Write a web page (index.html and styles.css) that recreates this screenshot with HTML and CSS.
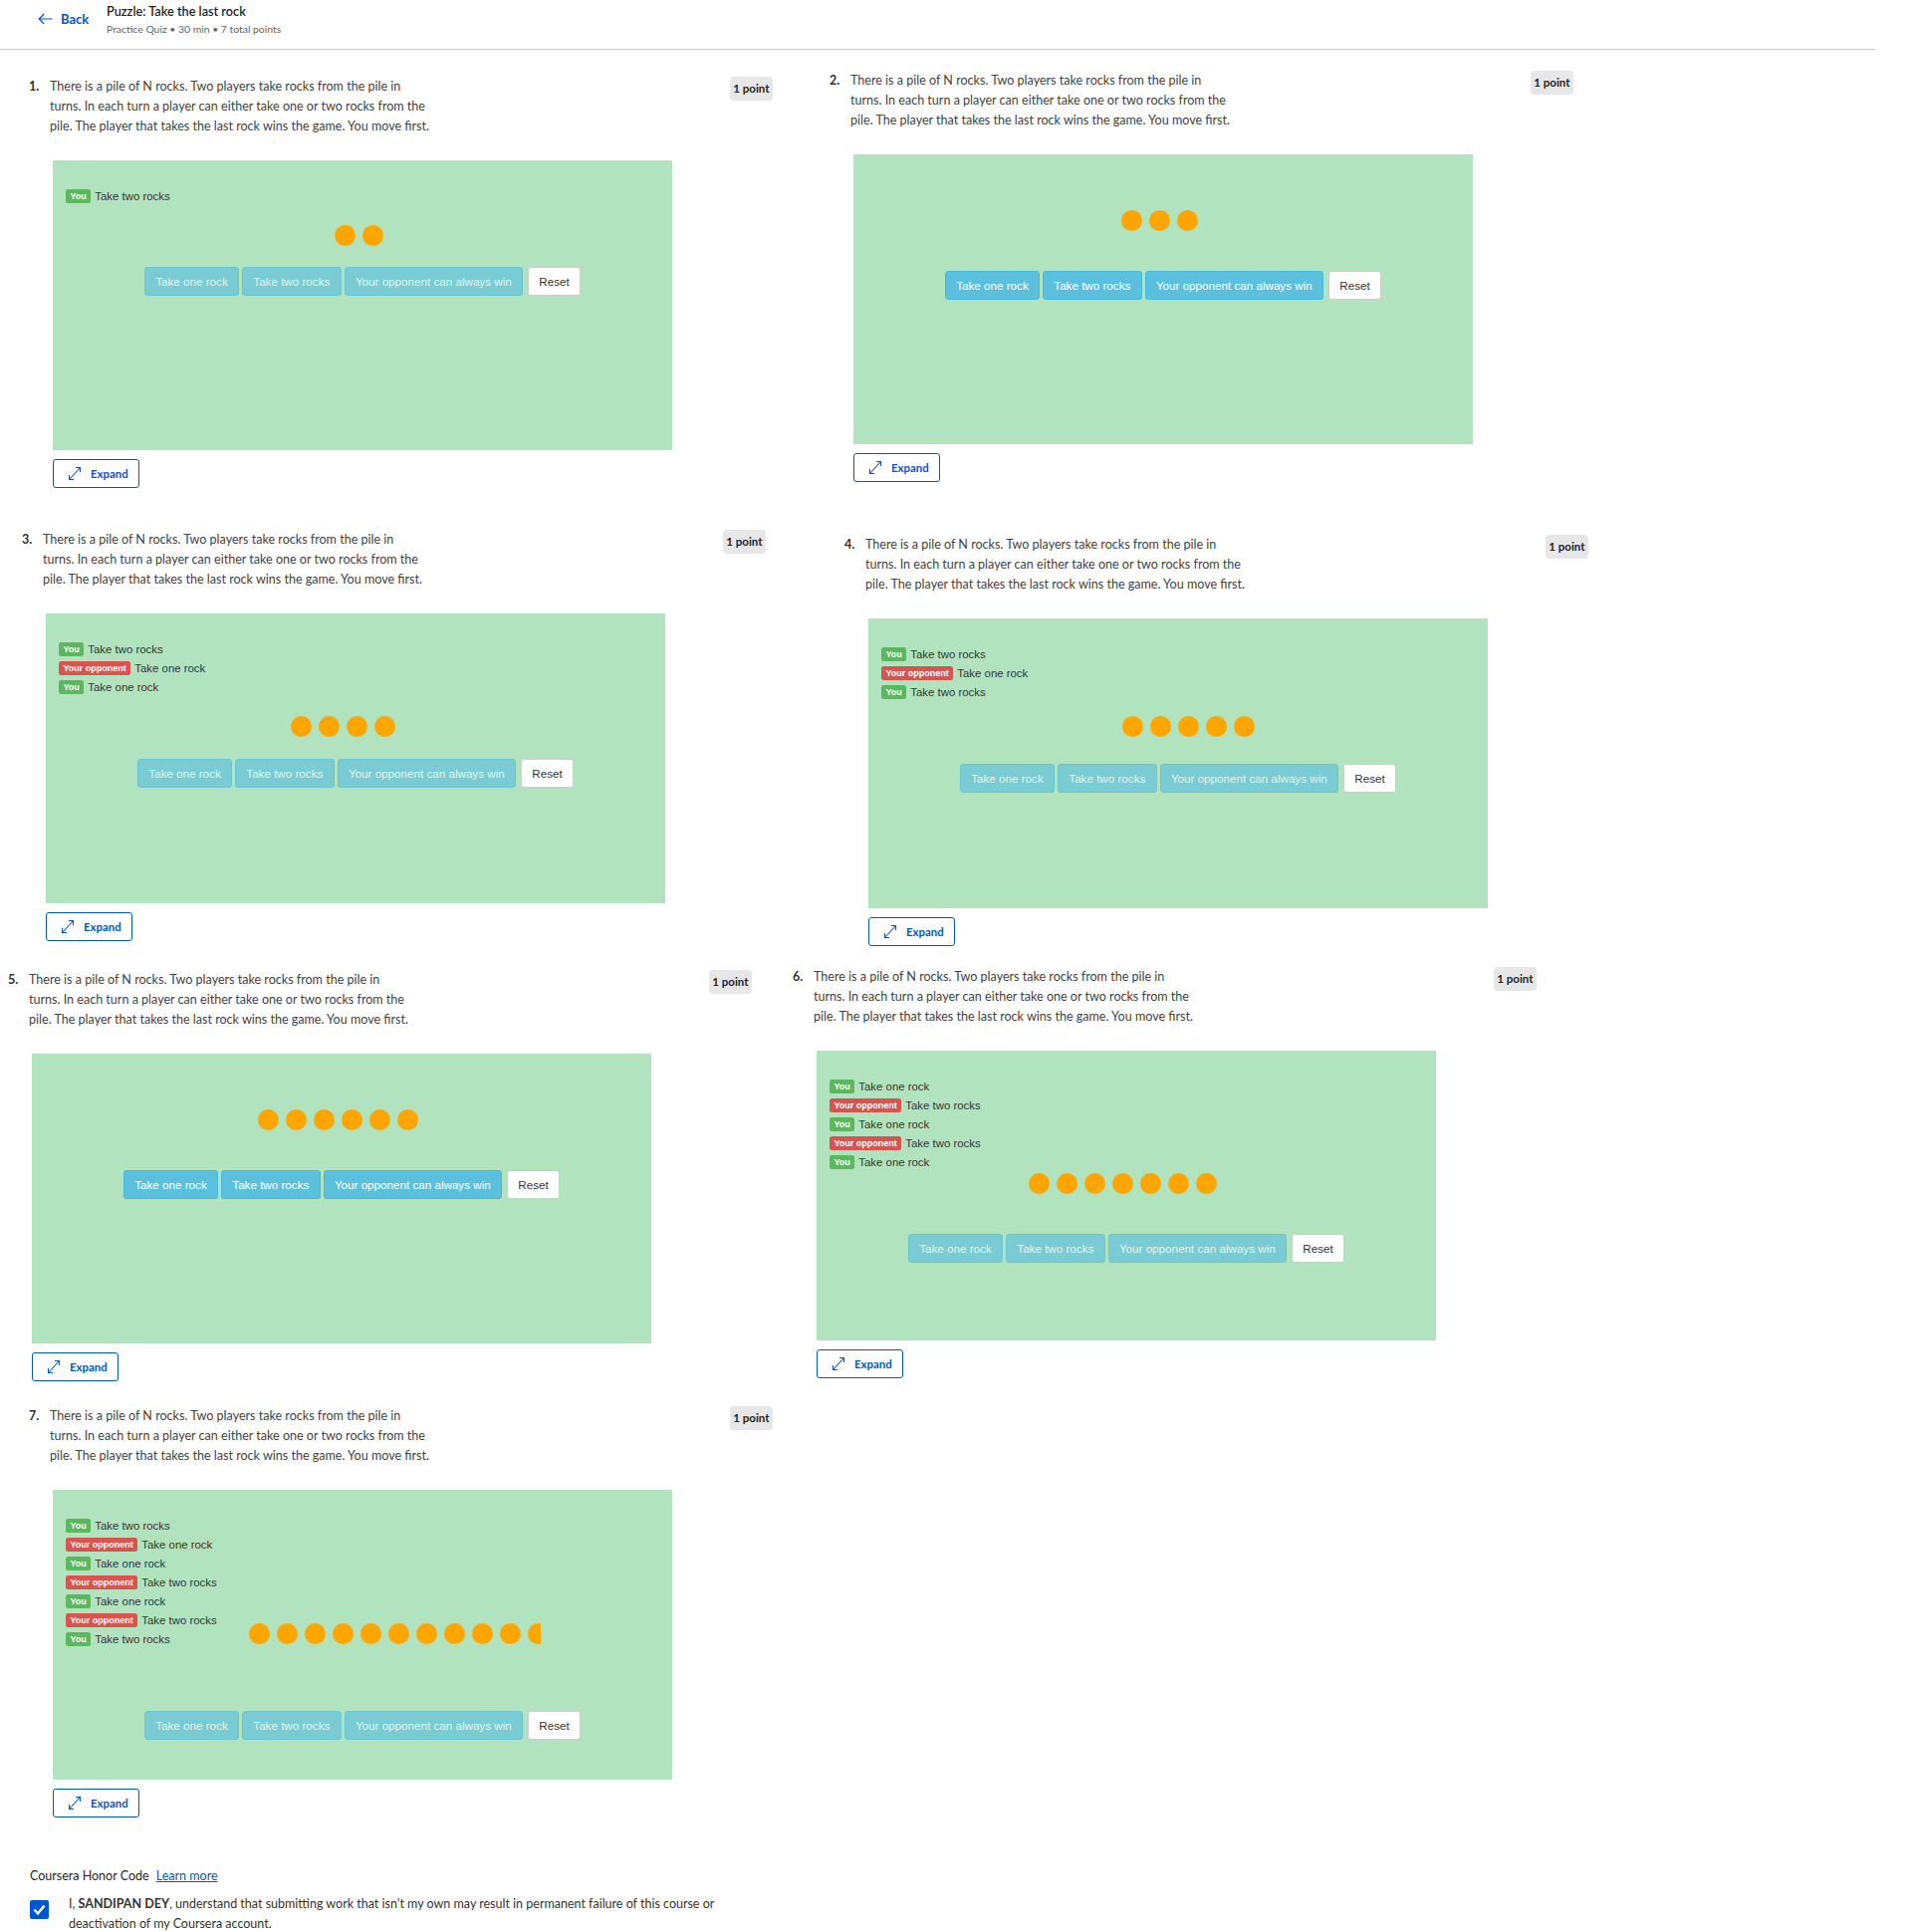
FILE: index.html
```html
<!DOCTYPE html>
<html lang="en">
<head>
<meta charset="utf-8">
<title>Puzzle: Take the last rock</title>
<link rel="stylesheet" href="styles.css">
</head>
<body>
<header class="topbar">
  <a class="back" href="#">
    <svg class="back-icon" width="15" height="12" viewBox="0 0 15 12"><path d="M14.5 6H1.2M6.2 1L1.2 6l5 5" fill="none" stroke="#0056d2" stroke-width="1.2"/></svg>
    <span>Back</span>
  </a>
  <div class="title-block">
    <div class="title">Puzzle: Take the last rock</div>
    <div class="subtitle">Practice Quiz • 30 min • 7 total points</div>
  </div>
</header>

<main class="questions">
  <div class="qrow qrow-1">
    <section class="question q1">
      <div class="q-head">
        <div class="q-num">1.</div>
        <div class="q-text">There is a pile of N rocks. Two players take rocks from the pile in<br>turns. In each turn a player can either take one or two rocks from the<br>pile. The player that takes the last rock wins the game. You move first.</div>
        <div class="points">1 point</div>
      </div>
      <div class="q-body">
        <div class="board lay-b">
          <div class="history">
            <div class="move"><span class="tag tag-you">You</span>Take two rocks</div>
          </div>
          <div class="rocks"><span class="rock"></span><span class="rock"></span></div>
          <div class="controls">
            <button class="btn btn-info is-disabled">Take one rock</button>
            <button class="btn btn-info is-disabled">Take two rocks</button>
            <button class="btn btn-info is-disabled">Your opponent can always win</button>
            <button class="btn btn-reset">Reset</button>
          </div>
        </div>
        <button class="expand"><svg width="14" height="15" viewBox="0 0 14 15"><path d="M1.5 13.5L12.5 1.5M8 1.5h4.5V6M1.5 9v4.5H6" fill="none" stroke="#0056d2" stroke-width="1.1"/></svg><span>Expand</span></button>
      </div>
    </section>

    <section class="question q2">
      <div class="q-head">
        <div class="q-num">2.</div>
        <div class="q-text">There is a pile of N rocks. Two players take rocks from the pile in<br>turns. In each turn a player can either take one or two rocks from the<br>pile. The player that takes the last rock wins the game. You move first.</div>
        <div class="points">1 point</div>
      </div>
      <div class="q-body">
        <div class="board lay-a">
          <div class="rocks"><span class="rock"></span><span class="rock"></span><span class="rock"></span></div>
          <div class="controls">
            <button class="btn btn-info">Take one rock</button>
            <button class="btn btn-info">Take two rocks</button>
            <button class="btn btn-info">Your opponent can always win</button>
            <button class="btn btn-reset">Reset</button>
          </div>
        </div>
        <button class="expand"><svg width="14" height="15" viewBox="0 0 14 15"><path d="M1.5 13.5L12.5 1.5M8 1.5h4.5V6M1.5 9v4.5H6" fill="none" stroke="#0056d2" stroke-width="1.1"/></svg><span>Expand</span></button>
      </div>
    </section>
  </div>

  <div class="qrow qrow-2">
    <section class="question q3">
      <div class="q-head">
        <div class="q-num">3.</div>
        <div class="q-text">There is a pile of N rocks. Two players take rocks from the pile in<br>turns. In each turn a player can either take one or two rocks from the<br>pile. The player that takes the last rock wins the game. You move first.</div>
        <div class="points">1 point</div>
      </div>
      <div class="q-body">
        <div class="board lay-c">
          <div class="history">
            <div class="move"><span class="tag tag-you">You</span>Take two rocks</div>
            <div class="move"><span class="tag tag-opp">Your opponent</span>Take one rock</div>
            <div class="move"><span class="tag tag-you">You</span>Take one rock</div>
          </div>
          <div class="rocks"><span class="rock"></span><span class="rock"></span><span class="rock"></span><span class="rock"></span></div>
          <div class="controls">
            <button class="btn btn-info is-disabled">Take one rock</button>
            <button class="btn btn-info is-disabled">Take two rocks</button>
            <button class="btn btn-info is-disabled">Your opponent can always win</button>
            <button class="btn btn-reset">Reset</button>
          </div>
        </div>
        <button class="expand"><svg width="14" height="15" viewBox="0 0 14 15"><path d="M1.5 13.5L12.5 1.5M8 1.5h4.5V6M1.5 9v4.5H6" fill="none" stroke="#0056d2" stroke-width="1.1"/></svg><span>Expand</span></button>
      </div>
    </section>

    <section class="question q4">
      <div class="q-head">
        <div class="q-num">4.</div>
        <div class="q-text">There is a pile of N rocks. Two players take rocks from the pile in<br>turns. In each turn a player can either take one or two rocks from the<br>pile. The player that takes the last rock wins the game. You move first.</div>
        <div class="points">1 point</div>
      </div>
      <div class="q-body">
        <div class="board lay-d">
          <div class="history">
            <div class="move"><span class="tag tag-you">You</span>Take two rocks</div>
            <div class="move"><span class="tag tag-opp">Your opponent</span>Take one rock</div>
            <div class="move"><span class="tag tag-you">You</span>Take two rocks</div>
          </div>
          <div class="rocks"><span class="rock"></span><span class="rock"></span><span class="rock"></span><span class="rock"></span><span class="rock"></span></div>
          <div class="controls">
            <button class="btn btn-info is-disabled">Take one rock</button>
            <button class="btn btn-info is-disabled">Take two rocks</button>
            <button class="btn btn-info is-disabled">Your opponent can always win</button>
            <button class="btn btn-reset">Reset</button>
          </div>
        </div>
        <button class="expand"><svg width="14" height="15" viewBox="0 0 14 15"><path d="M1.5 13.5L12.5 1.5M8 1.5h4.5V6M1.5 9v4.5H6" fill="none" stroke="#0056d2" stroke-width="1.1"/></svg><span>Expand</span></button>
      </div>
    </section>
  </div>

  <div class="qrow qrow-3">
    <section class="question q5">
      <div class="q-head">
        <div class="q-num">5.</div>
        <div class="q-text">There is a pile of N rocks. Two players take rocks from the pile in<br>turns. In each turn a player can either take one or two rocks from the<br>pile. The player that takes the last rock wins the game. You move first.</div>
        <div class="points">1 point</div>
      </div>
      <div class="q-body">
        <div class="board lay-a">
          <div class="rocks"><span class="rock"></span><span class="rock"></span><span class="rock"></span><span class="rock"></span><span class="rock"></span><span class="rock"></span></div>
          <div class="controls">
            <button class="btn btn-info">Take one rock</button>
            <button class="btn btn-info">Take two rocks</button>
            <button class="btn btn-info">Your opponent can always win</button>
            <button class="btn btn-reset">Reset</button>
          </div>
        </div>
        <button class="expand"><svg width="14" height="15" viewBox="0 0 14 15"><path d="M1.5 13.5L12.5 1.5M8 1.5h4.5V6M1.5 9v4.5H6" fill="none" stroke="#0056d2" stroke-width="1.1"/></svg><span>Expand</span></button>
      </div>
    </section>

    <section class="question q6">
      <div class="q-head">
        <div class="q-num">6.</div>
        <div class="q-text">There is a pile of N rocks. Two players take rocks from the pile in<br>turns. In each turn a player can either take one or two rocks from the<br>pile. The player that takes the last rock wins the game. You move first.</div>
        <div class="points">1 point</div>
      </div>
      <div class="q-body">
        <div class="board lay-e">
          <div class="history">
            <div class="move"><span class="tag tag-you">You</span>Take one rock</div>
            <div class="move"><span class="tag tag-opp">Your opponent</span>Take two rocks</div>
            <div class="move"><span class="tag tag-you">You</span>Take one rock</div>
            <div class="move"><span class="tag tag-opp">Your opponent</span>Take two rocks</div>
            <div class="move"><span class="tag tag-you">You</span>Take one rock</div>
          </div>
          <div class="rocks"><span class="rock"></span><span class="rock"></span><span class="rock"></span><span class="rock"></span><span class="rock"></span><span class="rock"></span><span class="rock"></span></div>
          <div class="controls">
            <button class="btn btn-info is-disabled">Take one rock</button>
            <button class="btn btn-info is-disabled">Take two rocks</button>
            <button class="btn btn-info is-disabled">Your opponent can always win</button>
            <button class="btn btn-reset">Reset</button>
          </div>
        </div>
        <button class="expand"><svg width="14" height="15" viewBox="0 0 14 15"><path d="M1.5 13.5L12.5 1.5M8 1.5h4.5V6M1.5 9v4.5H6" fill="none" stroke="#0056d2" stroke-width="1.1"/></svg><span>Expand</span></button>
      </div>
    </section>
  </div>

  <div class="qrow qrow-4">
    <section class="question q7">
      <div class="q-head">
        <div class="q-num">7.</div>
        <div class="q-text">There is a pile of N rocks. Two players take rocks from the pile in<br>turns. In each turn a player can either take one or two rocks from the<br>pile. The player that takes the last rock wins the game. You move first.</div>
        <div class="points">1 point</div>
      </div>
      <div class="q-body">
        <div class="board lay-f">
          <div class="board-top">
            <div class="history history-fixed">
              <div class="move"><span class="tag tag-you">You</span>Take two rocks</div>
              <div class="move"><span class="tag tag-opp">Your opponent</span>Take one rock</div>
              <div class="move"><span class="tag tag-you">You</span>Take one rock</div>
              <div class="move"><span class="tag tag-opp">Your opponent</span>Take two rocks</div>
              <div class="move"><span class="tag tag-you">You</span>Take one rock</div>
              <div class="move"><span class="tag tag-opp">Your opponent</span>Take two rocks</div>
              <div class="move"><span class="tag tag-you">You</span>Take two rocks</div>
            </div>
            <div class="rocks rocks-clip"><span class="rock"></span><span class="rock"></span><span class="rock"></span><span class="rock"></span><span class="rock"></span><span class="rock"></span><span class="rock"></span><span class="rock"></span><span class="rock"></span><span class="rock"></span><span class="rock"></span><span class="rock"></span></div>
          </div>
          <div class="controls">
            <button class="btn btn-info is-disabled">Take one rock</button>
            <button class="btn btn-info is-disabled">Take two rocks</button>
            <button class="btn btn-info is-disabled">Your opponent can always win</button>
            <button class="btn btn-reset">Reset</button>
          </div>
        </div>
        <button class="expand"><svg width="14" height="15" viewBox="0 0 14 15"><path d="M1.5 13.5L12.5 1.5M8 1.5h4.5V6M1.5 9v4.5H6" fill="none" stroke="#0056d2" stroke-width="1.1"/></svg><span>Expand</span></button>
      </div>
    </section>
  </div>

  <section class="honor">
    <div class="honor-title">Coursera Honor Code <a class="honor-link" href="#">Learn more</a></div>
    <div class="honor-row">
      <span class="checkbox"><svg width="19" height="19" viewBox="0 0 19 19"><path d="M4.5 9.5l3.5 4 6.5-8" fill="none" stroke="#fff" stroke-width="2.4"/></svg></span>
      <p class="honor-text">I, <b>SANDIPAN DEY</b>, understand that submitting work that isn’t my own may result in permanent failure of this course or<br>deactivation of my Coursera account.</p>
    </div>
  </section>
</main>
</body>
</html>
```

FILE: styles.css
```css
* { box-sizing: border-box; }

body {
  margin: 0;
  background: #fff;
  color: #3a3a3a;
  font-family: Lato, "Open Sans", sans-serif;
}

/* ---------- top bar ---------- */
.topbar {
  width: 1883px;
  height: 50px;
  border-bottom: 1px solid #c8c8c8;
  display: flex;
  align-items: flex-start;
}

.back {
  width: 69px;
  margin: 12px 0 0 38px;
  display: flex;
  align-items: center;
  gap: 8px;
  color: #0056d2;
  font-weight: 700;
  font-size: 13px;
  line-height: 14px;
  text-decoration: none;
}

.back-icon { flex: none; }

.title-block { padding-top: 3px; }

.title {
  font-size: 12.7px;
  font-weight: 600;
  line-height: 16px;
  color: #1f1f1f;
}

.subtitle {
  font-size: 10.4px;
  line-height: 20px;
  color: #636363;
}

/* ---------- question rows ---------- */
.qrow {
  display: flex;
  align-items: flex-start;
}

.qrow-1 { margin-top: 21px; }
.qrow-2 { margin-top: 42px; }
.qrow-3 { margin-top: 21px; }
.qrow-4 { margin-top: 25px; }

.question {
  width: 747px;
  flex: none;
}

.q1 { margin: 6px 0 0 29px; }
.q2 { margin-left: 57px; }
.q3 { margin-left: 22px; }
.q4 { margin: 5px 0 0 79px; }
.q5 { margin: 3px 0 0 8px; }
.q6 { margin-left: 41px; }
.q7 { margin-left: 29px; }

.q-head {
  display: flex;
  align-items: flex-start;
  font-size: 12.55px;
  line-height: 20px;
}

.q-num {
  width: 21px;
  flex: none;
  font-weight: 700;
  color: #333;
}

.q-text { color: #424242; }

.points {
  margin-left: auto;
  height: 24px;
  padding: 0 3.5px;
  border-radius: 4px;
  background: #e7e7e9;
  color: #1f1f1f;
  font-size: 11.5px;
  font-weight: 700;
  line-height: 24px;
  white-space: nowrap;
}

.q-body { margin-left: 24px; }

/* ---------- game board ---------- */
.board {
  width: 622px;
  height: 291px;
  margin-top: 24px;
  padding: 26px 13px 0;
  background: #b2e3bf;
  font-family: "Liberation Sans", Arial, sans-serif;
  color: #333;
}

.history { display: flex; flex-direction: column; }

.move {
  display: flex;
  align-items: center;
  height: 19px;
  font-size: 11.4px;
  white-space: nowrap;
}

.tag {
  height: 14px;
  margin-right: 4px;
  padding: 0 4.5px;
  border-radius: 2.5px;
  color: #fff;
  font-size: 9px;
  font-weight: 700;
  line-height: 14px;
}

.tag-you { background: #5cb85c; }
.tag-opp { background: #d9534f; }

.rocks {
  display: flex;
  justify-content: center;
  height: 21px;
}

.rock {
  flex: none;
  width: 21px;
  height: 21px;
  margin-right: 7px;
  border-radius: 50%;
  background: #ffa500;
}

.controls {
  display: flex;
  justify-content: center;
  gap: 3px;
}

.btn {
  height: 29px;
  padding: 0 10.3px;
  border: 1px solid;
  border-radius: 3px;
  font-family: "Liberation Sans", Arial, sans-serif;
  font-size: 11.65px;
  line-height: 27px;
  white-space: nowrap;
}

.btn-info {
  background: #5bc0de;
  border-color: #46b8da;
  color: #fff;
}

.btn-info.is-disabled { opacity: 0.65; }

.btn-reset {
  margin-left: 2px;
  background: #fff;
  border-color: #ccc;
  color: #333;
}

/* per-board vertical layouts */
.lay-a .rocks { margin-top: 30px; }
.lay-a .controls { margin-top: 40px; }

.lay-b .rocks { margin-top: 20px; }
.lay-b .controls { margin-top: 21px; }

.lay-c .rocks { margin-top: 20px; padding-right: 18px; }
.lay-c .controls { margin-top: 22px; }

.lay-d .rocks { margin-top: 15px; padding-left: 28px; }
.lay-d .controls { margin-top: 27px; }

.lay-e .rocks { margin-top: 2px; }
.lay-e .controls { margin-top: 40px; }

.board-top {
  display: flex;
  align-items: flex-end;
}

.history-fixed { width: 150px; flex: none; }

.rocks-clip {
  width: 293px;
  margin: 0 0 4px 34px;
  justify-content: flex-start;
  overflow: hidden;
}

.lay-f .controls { margin-top: 63px; }

/* ---------- expand ---------- */
.expand {
  display: flex;
  align-items: center;
  gap: 9px;
  width: 87px;
  height: 29px;
  margin-top: 9px;
  padding: 0 0 0 14px;
  border: 1px solid #0056d2;
  border-radius: 3px;
  background: #fff;
  color: #0056d2;
  font-family: Lato, "Open Sans", sans-serif;
  font-size: 11.4px;
  font-weight: 700;
}

/* ---------- honor code ---------- */
.honor {
  margin: 49px 0 0 30px;
  font-size: 12.5px;
  line-height: 20px;
  color: #1f1f1f;
}

.honor-link {
  margin-left: 4px;
  color: #0056d2;
}

.honor-row {
  display: flex;
  align-items: flex-start;
  gap: 20px;
  margin-top: 8px;
}

.checkbox {
  flex: none;
  width: 19px;
  height: 19px;
  margin-top: 6px;
  border-radius: 2px;
  background: #0056d2;
  display: flex;
}

.honor-text {
  margin: 0;
  color: #333;
}
```
